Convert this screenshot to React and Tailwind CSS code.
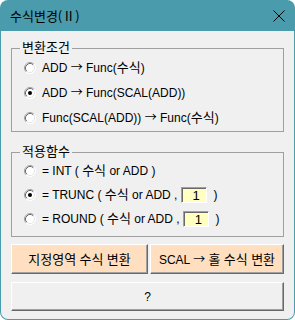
import React from "react";

function Mixed({ text }) {
  const parts = text.split(/([가-힣]+|→)/);
  return (
    <>
      {parts.map((p, i) =>
        p === "→" ? (
          <span key={i} className="font-['Noto_Sans_CJK_KR'] text-[12px]">{p}</span>
        ) : /[가-힣]/.test(p) ? (
          <span key={i} className="text-[13px]">{p}</span>
        ) : (
          <span key={i}>{p}</span>
        )
      )}
    </>
  );
}

function Radio({ checked }) {
  return (
    <svg width="12" height="12" viewBox="0 0 12 12" className="shrink-0">
      <circle cx="6" cy="6" r="5.5" fill="#ffffff" />
      <path d="M 2.11 9.89 A 5.5 5.5 0 0 1 9.89 2.11" fill="none" stroke="#a0a0a0" strokeWidth="1" />
      <path d="M 9.89 2.11 A 5.5 5.5 0 0 1 2.11 9.89" fill="none" stroke="#ffffff" strokeWidth="1" />
      <path d="M 2.82 9.18 A 4.5 4.5 0 0 1 9.18 2.82" fill="none" stroke="#696969" strokeWidth="1" />
      <path d="M 9.18 2.82 A 4.5 4.5 0 0 1 2.82 9.18" fill="none" stroke="#e3e3e3" strokeWidth="1" />
      {checked && <circle cx="6" cy="6" r="2" fill="#000000" />}
    </svg>
  );
}

function Row({ checked, children, h }) {
  return (
    <div className={`flex items-center gap-[6px] ${h}`}>
      <Radio checked={checked} />
      <div className="whitespace-pre leading-[16px]">{children}</div>
    </div>
  );
}

function NumBox() {
  return (
    <span className="inline-flex align-middle w-[26px] h-[16px] bg-[#ffffc0] border border-t-[#a0a0a0] border-l-[#a0a0a0] border-b-white border-r-white shadow-[inset_1px_1px_0_#696969] items-center justify-end pr-[6px] text-[13px] leading-none">
      1
    </span>
  );
}

const btn =
  "border border-t-white border-l-white border-b-[#696969] border-r-[#696969] shadow-[inset_-1px_-1px_0_#a0a0a0] text-[12px] leading-none";

export default function App() {
  const font = { fontFamily: '"Liberation Sans", "Noto Sans CJK KR", sans-serif' };
  const titleFont = { fontFamily: '"Noto Sans CJK KR", "Noto Sans", sans-serif' };
  return (
    <div className="w-[295px] h-[320px] bg-white text-black" style={font}>
      <div className="w-[295px] h-[320px] bg-[#4a9bab] rounded-[8px] flex flex-col overflow-hidden">
        <div className="h-[31px] flex items-center justify-between pl-[10px] pr-[10px] shrink-0">
          <span className="text-[13px] leading-none text-black" style={titleFont}>수식변경(Ⅱ)</span>
          <svg width="12" height="12" viewBox="0 0 12 12">
            <path d="M0.5 0.5 L11.5 11.5 M11.5 0.5 L0.5 11.5" stroke="#000" strokeWidth="1" />
          </svg>
        </div>
        <div className="flex-1 mx-[1px] mb-[1px] bg-[#f0f0f0] rounded-b-[7px] px-[10px] pt-[10px] flex flex-col text-[12px]">
          <fieldset className="border border-[#a0a0a0] pb-[1px]">
            <legend className="ml-[8px] px-[2px] h-[14px] leading-[14px] text-[13px]">변환조건</legend>
            <div className="pl-[12px] flex flex-col">
              <Row checked={false} h="h-[25px]"><Mixed text="ADD → Func(수식)" /></Row>
              <Row checked={true} h="h-[25px]"><Mixed text="ADD → Func(SCAL(ADD))" /></Row>
              <Row checked={false} h="h-[25px]"><Mixed text="Func(SCAL(ADD)) → Func(수식)" /></Row>
            </div>
          </fieldset>
          <fieldset className="mt-[13px] border border-[#a0a0a0] pb-[5px]">
            <legend className="ml-[8px] px-[2px] h-[14px] leading-[14px] text-[13px]">적용함수</legend>
            <div className="pl-[12px] flex flex-col">
              <Row checked={false} h="h-[24px]"><Mixed text="= INT ( 수식 or ADD )" /></Row>
              <Row checked={true} h="h-[24px]">
                <Mixed text="= TRUNC ( 수식 or ADD , " />
                <NumBox />
                <span>  )</span>
              </Row>
              <Row checked={false} h="h-[24px]">
                <Mixed text="= ROUND ( 수식 or ADD , " />
                <NumBox />
                <span>  )</span>
              </Row>
            </div>
          </fieldset>
          <div className="mt-[7px] flex gap-[2px]">
            <button className={`w-[137px] h-[30px] bg-[#ffdfc0] ${btn}`}><Mixed text="지정영역 수식 변환" /></button>
            <button className={`flex-1 h-[30px] bg-[#ffdfc0] ${btn}`}><Mixed text="SCAL → 홀 수식 변환" /></button>
          </div>
          <button className={`mt-[8px] w-full h-[29px] bg-[#f0f0f0] ${btn}`}>?</button>
        </div>
      </div>
    </div>
  );
}
